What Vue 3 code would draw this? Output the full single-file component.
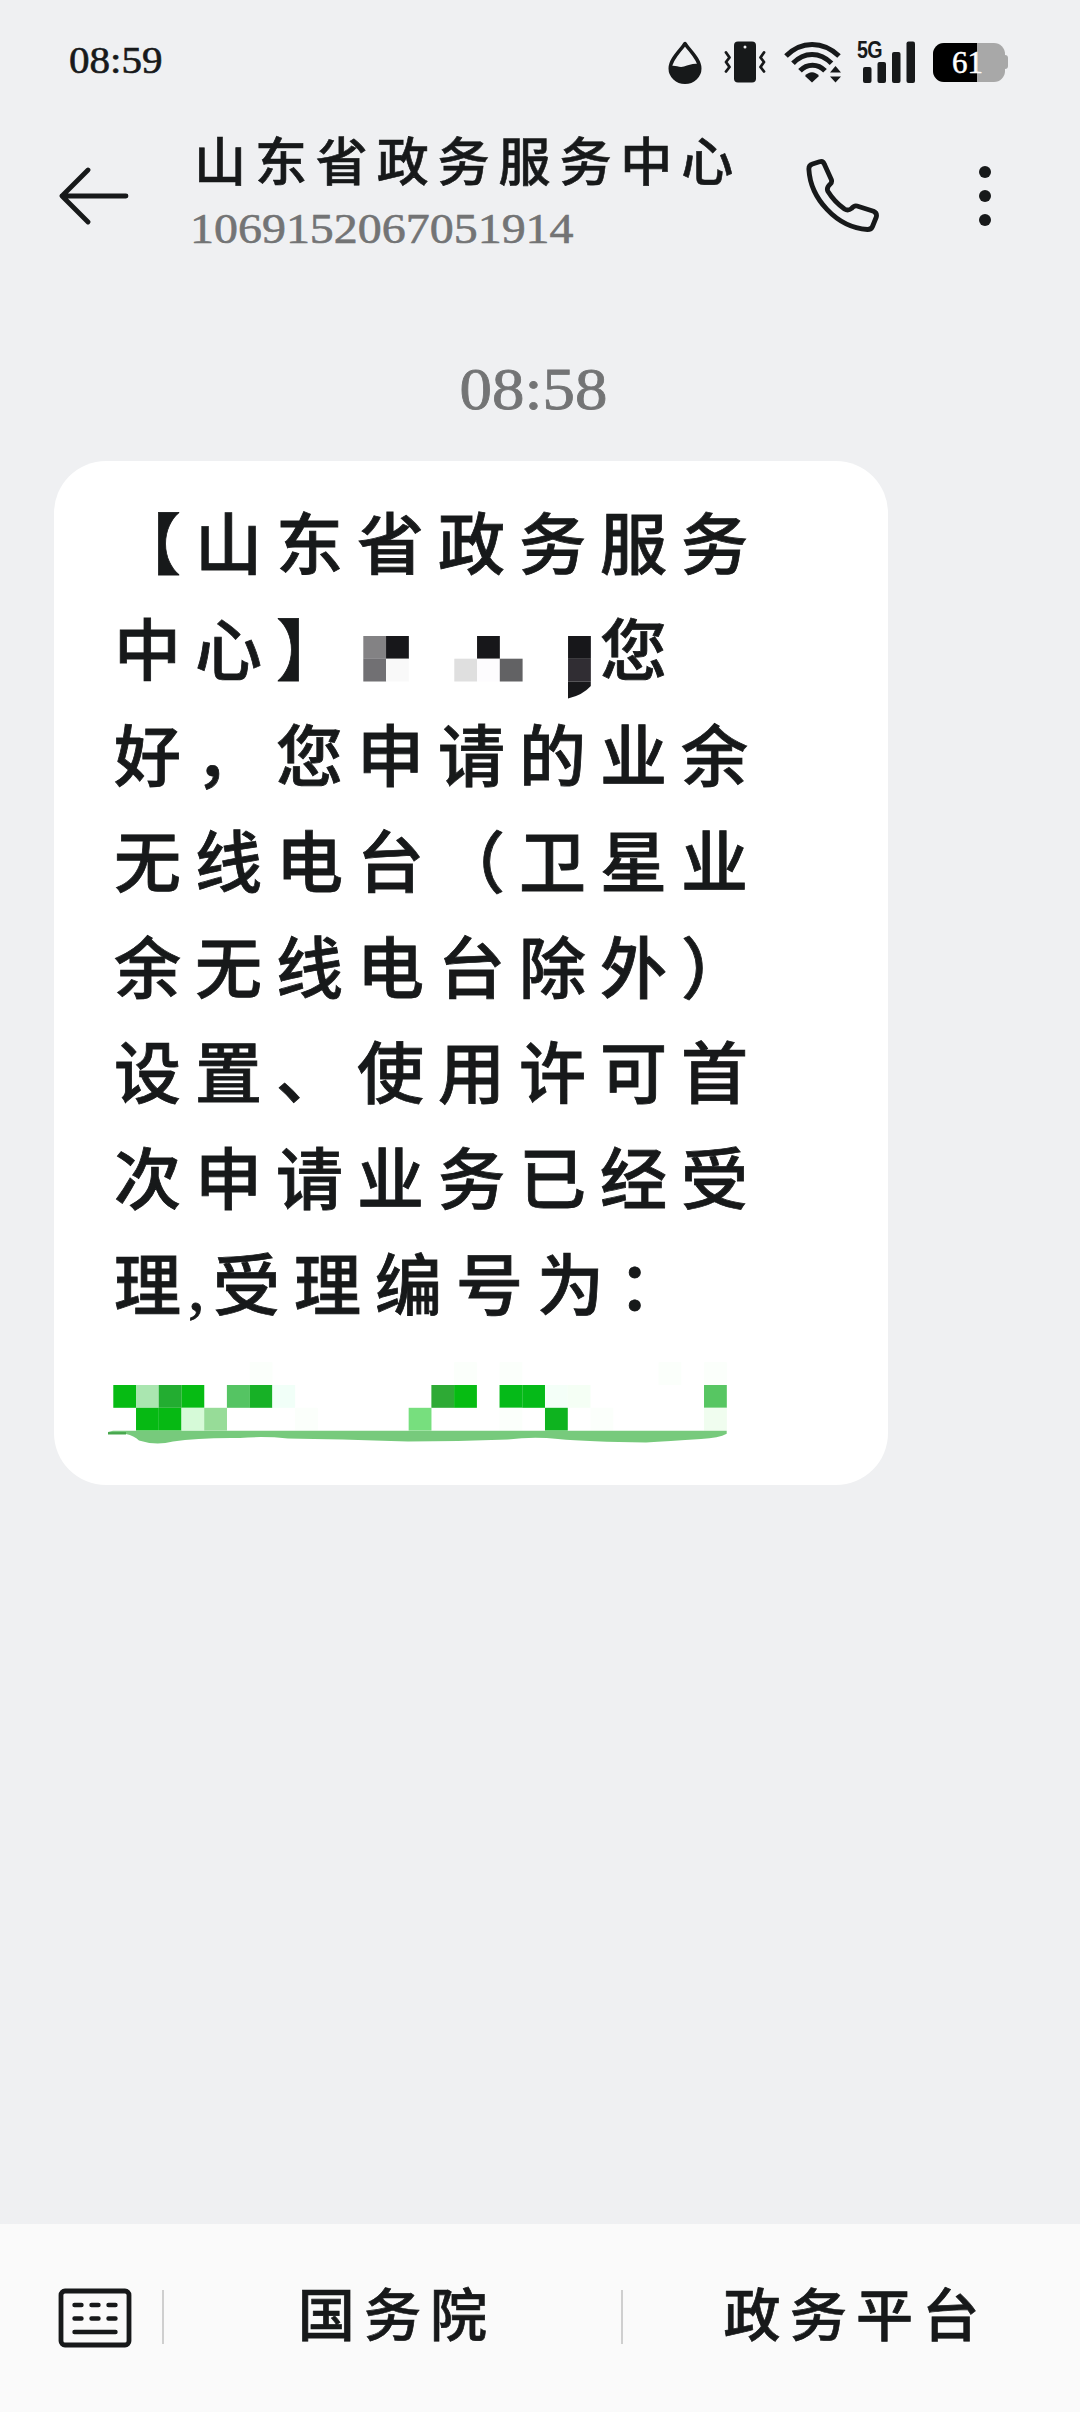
<template>
  <div class="phone">
    <div class="status-bar">
      <span class="clock">08:59</span>
      <div class="status-icons">
        <svg class="icon-drop" viewBox="0 0 34 43" width="34" height="43">
          <path d="M17 2.5C13 9 2.2 18 2.2 27.5a14.8 13.8 0 0 0 29.6 0C31.8 18 21 9 17 2.5z" fill="none" stroke="#17191a" stroke-width="3.4" stroke-linejoin="round" />
          <path d="M3 25c5-1 8 2 13 .5 5-1.500 9-3.500 15-2.500v5a14 13.500 0 0 1-28 0z" fill="#17191a" />
        </svg>
        <svg class="icon-vibrate" viewBox="0 0 42 42" width="42" height="42">
          <rect x="10" y="0.500" width="22" height="41" rx="4" fill="#17191a" />
          <circle cx="21" cy="6" r="1.500" fill="#eff0f2" />
          <path d="M2 11.500l3.500 5-3.500 4.500 3.500 5-3.500 4.500M40 11.500l-3.500 5 3.500 4.500-3.500 5 3.500 4.500" fill="none" stroke="#17191a" stroke-width="2.800" stroke-linecap="round" stroke-linejoin="round" />
        </svg>
        <svg class="icon-wifi" viewBox="0 0 58 42" width="58" height="42">
          <g fill="none" stroke="#17191a" stroke-width="5" stroke-linecap="butt">
            <path d="M2 15C17-0.500 39-0.500 55 15" />
            <path d="M9 22.300C20 10.500 36 10.500 47.500 22.300" />
            <path d="M16 29.800c7-7.500 18-7.500 25 0" />
          </g>
          <path d="M21 35c4-5 10-5 14 0l-7 6.500z" fill="#17191a" />
          <path d="M46 31.500l5.500-6.500 5.500 6.500zM46 35.500h11l-5.500 6z" fill="#17191a" />
        </svg>
        <div class="signal">
          <span class="network">5G</span>
          <svg viewBox="0 0 53 42" width="53" height="42">
            <rect x="0" y="26" width="8.500" height="16" rx="2" />
            <rect x="14.500" y="21" width="8.500" height="21" rx="2" />
            <rect x="29" y="11" width="8.500" height="31" rx="2" />
            <rect x="43.500" y="0.500" width="8.500" height="41.500" rx="2" />
          </svg>
        </div>
        <div class="battery">
          <div class="battery-body">
            <div class="battery-level" :style="{ width: battery + '%' }"></div>
            <span class="battery-text">{{ battery }}</span>
          </div>
          <div class="battery-cap"></div>
        </div>
      </div>
    </div>

    <header class="header">
      <svg class="back" viewBox="0 0 70 60" width="70" height="60">
        <path d="M29 4L3 30l26 26M3 30h64" fill="none" stroke="#17191a" stroke-width="4.800" stroke-linecap="round" stroke-linejoin="round" />
      </svg>
      <div class="contact">
        <div class="contact-name">山东省政务服务中心</div>
        <div class="contact-number">1069152067051914</div>
      </div>
      <svg class="call" viewBox="0 0 74 74" width="74" height="74">
        <path d="M3.900 10.500Q3.500 6.300 7.500 5L14.500 2.700Q18.300 1.700 19.500 5.500L26.300 20.500Q27.300 23 25.300 25Q21 29 23 32.500Q29.500 43 39.500 50Q43 52.300 46.500 49.500Q49 46.300 52 47L68.500 52.300Q72.300 54 71.300 58L67.500 67.500Q66.300 70.500 62.500 70.500C31 68.500 5.500 39 3.900 10.500z" fill="none" stroke="#17191a" stroke-width="4.800" stroke-linejoin="round" />
      </svg>
      <div class="more">
        <i v-for="n in 3" :key="n"></i>
      </div>
    </header>

    <main class="conversation">
      <div class="time">08:58</div>

      <div class="bubble">
        <div v-for="(line, i) in lines" :key="i" class="line">
          <template v-for="(part, j) in line" :key="j">
            <svg v-if="part === MASK" class="name-mask" viewBox="0 0 243 106" width="243" height="106">
              <rect
                v-for="(c, k) in nameCells"
                :key="k"
                :x="6.3 + c[0] * 22.75"
                :y="36 + c[1] * 22.7"
                width="22.8"
                height="22.8"
                :fill="c[2]"
              />
              <path d="M211 81.400h22.800v4.500q-8 9-22.800 12.600z" fill="#17171a" />
            </svg>
            <span v-else :class="{ comma: part === ',', tight: line[j + 1] === ',' }">{{ part }}</span>
          </template>
        </div>

        <svg class="number-mask" viewBox="0 0 624 90" width="624" height="90">
          <rect
            v-for="(c, k) in numberCells"
            :key="k"
            :x="5.3 + c[0] * 22.72"
            :y="23 + c[1] * 22.8"
            width="22.8"
            height="22.8"
            :fill="c[2]"
          />
          <path d="M5 68.800H618.700v3Q611 76 593 77Q560 79 538 80.500C500 80 470 79 450 77Q425 74.500 400 77.500Q350 79.500 300 79.500Q230 77 180 76.500Q155 74 132 76Q90 75.500 65 79.500Q48 84 31 78.500Q26 73.500 18 72H0v-2z" fill="#77ca7c" />
          <path d="M0 71.300h18" stroke="#47a64d" stroke-width="2.400" fill="none" />
        </svg>
      </div>
    </main>

    <footer class="menu-bar">
      <button class="keyboard">
        <svg viewBox="0 0 74 60" width="74" height="60">
          <rect x="3" y="3" width="68" height="54" rx="4" fill="none" stroke="#17191a" stroke-width="4.800" />
          <path d="M16.500 17h7M33.500 17h7M50.500 17h7M16.500 30.500h7M33.500 30.500h7M50.500 30.500h7M16.500 44h41" stroke="#17191a" stroke-width="4.400" stroke-linecap="round" />
        </svg>
      </button>
      <button v-for="item in menus" :key="item" class="menu-item">{{ item }}</button>
    </footer>
  </div>
</template>

<script setup>
const battery = 61

const MASK = '*'

const lines = [
  ['【山东省政务服务'],
  ['中心】', MASK, '您'],
  ['好，您申请的业余'],
  ['无线电台（卫星业'],
  ['余无线电台除外）'],
  ['设置、使用许可首'],
  ['次申请业务已经受'],
  ['理', ',', '受理编号为：']
]

// [column, row, color]
const nameCells = [
  [0, 0, '#838284'],
  [1, 0, '#17171a'],
  [0, 1, '#717073'],
  [1, 1, '#f9f9f9'],
  [5, 0, '#17171a'],
  [4, 1, '#dfdfdf'],
  [5, 1, '#fdfcfe'],
  [6, 1, '#626264'],
  [9, 0, '#17171a'],
  [9, 1, '#302d33']
]

const numberCells = [
  [0, 0, '#06bb13'],
  [1, 0, '#aae6b0'],
  [2, 0, '#23ad31'],
  [3, 0, '#06bb13'],
  [5, 0, '#55c463'],
  [6, 0, '#17b126'],
  [7, 0, '#f1fff8'],
  [14, 0, '#2eaa35'],
  [15, 0, '#06bc12'],
  [17, 0, '#05ba18'],
  [18, 0, '#05ba18'],
  [19, 0, '#f4fff8'],
  [20, 0, '#f5fff5'],
  [26, 0, '#57c662'],
  [1, 1, '#06b913'],
  [2, 1, '#06b913'],
  [3, 1, '#d6fad8'],
  [4, 1, '#97dc98'],
  [8, 1, '#fbfffb'],
  [13, 1, '#77df7e'],
  [17, 1, '#fbfffb'],
  [19, 1, '#0eb31f'],
  [21, 1, '#fbfffb'],
  [26, 1, '#f0fdef'],
  [6, -1, '#fbfffb'],
  [15, -1, '#fbfffb'],
  [17, -1, '#fbfffb'],
  [24, -1, '#fbfffb'],
  [26, -1, '#fbfffb']
]

const menus = ['国务院', '政务平台']
</script>

<style>
body {
  margin: 0;
  background: #eff0f2;
}
</style>

<style scoped>
.phone {
  display: flex;
  flex-direction: column;
  width: 1080px;
  height: 2412px;
  overflow: hidden;
  background: #eff0f2;
  color: #17191a;
  font-family: "Liberation Serif", "Noto Sans CJK SC", serif;
  font-weight: 500;
}

.status-bar {
  display: flex;
  justify-content: space-between;
  align-items: center;
  height: 124px;
  padding: 0 72px 0 69px;
  box-sizing: border-box;
}

.clock {
  font-size: 37px;
  line-height: 40px;
  -webkit-text-stroke: 0.6px currentColor;
  margin-top: -3px;
  transform: scaleX(1.11);
  transform-origin: left;
}

.status-icons {
  display: flex;
  align-items: center;
}

.icon-vibrate {
  margin-left: 22px;
}

.icon-wifi {
  margin-left: 18px;
}

.signal {
  position: relative;
  display: flex;
  justify-content: flex-end;
  width: 59px;
  margin-left: 15px;
  fill: #17191a;
}

.network {
  position: absolute;
  left: 0;
  top: -1px;
  font-family: "Liberation Sans", sans-serif;
  font-size: 24px;
  font-weight: bold;
  line-height: 20px;
  letter-spacing: -1px;
  transform: scaleX(0.82);
  transform-origin: left;
}

.battery {
  display: flex;
  align-items: center;
  margin-left: 17px;
}

.battery-body {
  position: relative;
  width: 72px;
  height: 39px;
  border-radius: 11px;
  overflow: hidden;
  background: #a8a8a8;
}

.battery-level {
  height: 100%;
  background: #000;
}

.battery-text {
  position: absolute;
  left: 19px;
  top: 0;
  color: #fff;
  font-size: 31px;
  line-height: 39px;
  -webkit-text-stroke: 0.5px #fff;
}

.battery-cap {
  width: 3px;
  height: 14px;
  border-radius: 0 4px 4px 0;
  background: #a8a8a8;
}

.header {
  display: flex;
  align-items: center;
  height: 143px;
  margin-bottom: 1px;
  padding: 0 89px 0 59px;
}

.contact {
  flex: 1;
  margin-left: 61px;
  padding-bottom: 2px;
}

.contact-name {
  padding-left: 4px;
  font-size: 52px;
  line-height: 64px;
  letter-spacing: 8.900px;
  white-space: nowrap;
  -webkit-text-stroke: 0.6px currentColor;
}

.contact-number {
  width: 344px;
  margin-top: 5px;
  color: #737475;
  font-size: 43px;
  line-height: 56px;
  transform: scaleX(1.115);
  transform-origin: left;
  -webkit-text-stroke: 0.6px currentColor;
}

.call {
  margin-right: 100px;
}

.more {
  display: flex;
  flex-direction: column;
  gap: 12px;
}

.more i {
  width: 12px;
  height: 12px;
  border-radius: 50%;
  background: #17191a;
}

.conversation {
  flex: 1;
  padding: 88px 54px 0;
}

.time {
  width: 959px;
  color: #737475;
  font-size: 59px;
  line-height: 66px;
  text-align: center;
  transform: scaleX(1.1);
  -webkit-text-stroke: 0.8px currentColor;
}

.bubble {
  width: 834px;
  height: 1024px;
  margin-top: 39px;
  padding: 33px 0 0 60px;
  border-radius: 52px;
  background: #fff;
  box-sizing: border-box;
}

.line {
  display: flex;
  height: 105.900px;
  font-size: 67px;
  line-height: 105.900px;
  letter-spacing: 14px;
  white-space: nowrap;
  -webkit-text-stroke: 0.8px currentColor;
}

.line .tight {
  letter-spacing: 7px;
}

.comma {
  width: 25px;
  letter-spacing: 0;
}

.name-mask {
  flex: none;
}

.number-mask {
  display: block;
  margin: 21px 0 0 -6px;
}

.menu-bar {
  display: flex;
  height: 188px;
  background: #fafafa;
}

.menu-bar button {
  display: flex;
  align-items: center;
  justify-content: center;
  padding: 0;
  border: 0;
  background: none;
  color: inherit;
  font: inherit;
}

.menu-bar .keyboard {
  width: 162px;
  padding-left: 27px;
  box-sizing: border-box;
}

.menu-bar .menu-item {
  position: relative;
  flex: 1;
  padding-bottom: 14px;
  padding-left: 11px;
  box-sizing: border-box;
  font-size: 57px;
  letter-spacing: 9.200px;
  -webkit-text-stroke: 0.7px currentColor;
}

.menu-item::before {
  content: "";
  position: absolute;
  left: 0;
  top: 66px;
  width: 2px;
  height: 54px;
  background: #cfcfcf;
}
</style>
